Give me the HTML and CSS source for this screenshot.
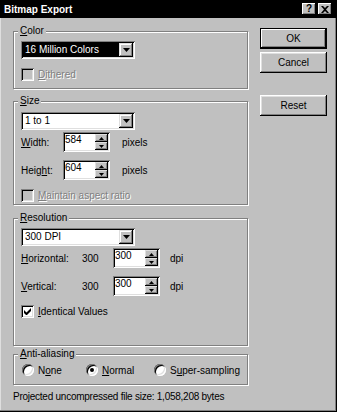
FILE: index.html
```html
<!DOCTYPE html>
<html lang="en">
<head>
    <meta charset="UTF-8">
    <title>Bitmap Export</title>
    <link rel="stylesheet" href="styles.css">
</head>
<body>
    <div class="dialog">
        <div class="titlebar">
            <span class="title">Bitmap Export</span>
            <span class="caption-btns">
                <span class="cap-btn">?</span>
                <span class="cap-btn">
                    <svg width="8" height="7" viewBox="0 0 8 7"><path d="M0 0h2l2 2 2-2h2L5 3.5 8 7H6L4 5 2 7H0l3-3.5z" fill="#000"/></svg>
                </span>
            </span>
        </div>
        <div class="body">
            <div class="left">
                <fieldset class="group group-color">
                    <legend><u>C</u>olor</legend>
                    <div class="combo selected">
                        <span class="combo-text">16 Million Colors</span>
                        <span class="combo-btn"><svg width="7" height="4" viewBox="0 0 7 4"><path d="M0 0h7L3.5 4z" fill="#000"/></svg></span>
                    </div>
                    <div class="check-row disabled">
                        <span class="checkbox"></span>
                        <span class="check-label"><u>D</u>ithered</span>
                    </div>
                </fieldset>

                <fieldset class="group group-size">
                    <legend><u>S</u>ize</legend>
                    <div class="combo">
                        <span class="combo-text">1 to 1</span>
                        <span class="combo-btn"><svg width="7" height="4" viewBox="0 0 7 4"><path d="M0 0h7L3.5 4z" fill="#000"/></svg></span>
                    </div>
                    <div class="row first-row">
                        <span class="lbl lbl-size"><u>W</u>idth:</span>
                        <span class="spin spin-size">
                            <span class="spin-text">584</span>
                            <span class="spin-btns">
                                <span class="spin-btn"><svg width="5" height="3" viewBox="0 0 5 3"><path d="M2.5 0L5 3H0z" fill="#000"/></svg></span>
                                <span class="spin-btn"><svg width="5" height="3" viewBox="0 0 5 3"><path d="M0 0h5L2.5 3z" fill="#000"/></svg></span>
                            </span>
                        </span>
                        <span class="unit">pixels</span>
                    </div>
                    <div class="row">
                        <span class="lbl lbl-size">Heig<u>h</u>t:</span>
                        <span class="spin spin-size">
                            <span class="spin-text">604</span>
                            <span class="spin-btns">
                                <span class="spin-btn"><svg width="5" height="3" viewBox="0 0 5 3"><path d="M2.5 0L5 3H0z" fill="#000"/></svg></span>
                                <span class="spin-btn"><svg width="5" height="3" viewBox="0 0 5 3"><path d="M0 0h5L2.5 3z" fill="#000"/></svg></span>
                            </span>
                        </span>
                        <span class="unit">pixels</span>
                    </div>
                    <div class="check-row disabled">
                        <span class="checkbox"></span>
                        <span class="check-label"><u>M</u>aintain aspect ratio</span>
                    </div>
                </fieldset>

                <fieldset class="group group-res">
                    <legend><u>R</u>esolution</legend>
                    <div class="combo">
                        <span class="combo-text">300 DPI</span>
                        <span class="combo-btn"><svg width="7" height="4" viewBox="0 0 7 4"><path d="M0 0h7L3.5 4z" fill="#000"/></svg></span>
                    </div>
                    <div class="row first-row">
                        <span class="lbl lbl-res"><u>H</u>orizontal:</span>
                        <span class="value">300</span>
                        <span class="spin spin-res">
                            <span class="spin-text">300</span>
                            <span class="spin-btns">
                                <span class="spin-btn"><svg width="5" height="3" viewBox="0 0 5 3"><path d="M2.5 0L5 3H0z" fill="#000"/></svg></span>
                                <span class="spin-btn"><svg width="5" height="3" viewBox="0 0 5 3"><path d="M0 0h5L2.5 3z" fill="#000"/></svg></span>
                            </span>
                        </span>
                        <span class="unit">dpi</span>
                    </div>
                    <div class="row">
                        <span class="lbl lbl-res"><u>V</u>ertical:</span>
                        <span class="value">300</span>
                        <span class="spin spin-res">
                            <span class="spin-text">300</span>
                            <span class="spin-btns">
                                <span class="spin-btn"><svg width="5" height="3" viewBox="0 0 5 3"><path d="M2.5 0L5 3H0z" fill="#000"/></svg></span>
                                <span class="spin-btn"><svg width="5" height="3" viewBox="0 0 5 3"><path d="M0 0h5L2.5 3z" fill="#000"/></svg></span>
                            </span>
                        </span>
                        <span class="unit">dpi</span>
                    </div>
                    <div class="check-row">
                        <span class="checkbox checked"><svg width="7" height="7" viewBox="0 0 7 7"><path d="M0 2v3l2 2h1l4-4V0L2.5 4.5z" fill="#000"/></svg></span>
                        <span class="check-label"><u>I</u>dentical Values</span>
                    </div>
                </fieldset>

                <fieldset class="group group-aa">
                    <legend><u>A</u>nti-aliasing</legend>
                    <div class="radio-row">
                        <span class="radio-item radio-none"><span class="radio"></span><span class="radio-label">N<u>o</u>ne</span></span>
                        <span class="radio-item radio-normal"><span class="radio on"></span><span class="radio-label"><u>N</u>ormal</span></span>
                        <span class="radio-item"><span class="radio"></span><span class="radio-label">S<u>u</u>per-sampling</span></span>
                    </div>
                </fieldset>

                <div class="status">Projected uncompressed file size: 1,058,208 bytes</div>
            </div>
            <div class="right">
                <div class="btn default">OK</div>
                <div class="btn">Cancel</div>
                <div class="btn reset">Reset</div>
            </div>
        </div>
    </div>
</body>
</html>
```

FILE: styles.css
```css
body {
    margin: 0;
    background: #c0c0c0;
    font-family: "Liberation Sans", Arial, sans-serif;
    font-size: 10px;
    color: #000;
}
u {
    text-underline-offset: 1px;
}
.dialog {
    width: 337px;
    height: 412px;
    box-sizing: border-box;
    background: #c0c0c0;
    display: flex;
    flex-direction: column;
    box-shadow: inset -1px -1px #000, inset -2px -2px #808080, inset 1px 1px #dfdfdf;
}
.titlebar {
    height: 18px;
    background: #000;
    color: #fff;
    display: flex;
    align-items: center;
    justify-content: space-between;
    padding: 0 5px 0 4px;
}
.title {
    font-weight: bold;
    font-size: 10px;
}
.caption-btns {
    display: flex;
    gap: 2px;
}
.cap-btn {
    width: 14px;
    height: 12px;
    background: #c0c0c0;
    color: #000;
    font-weight: bold;
    font-size: 10px;
    line-height: 12px;
    text-align: center;
    display: flex;
    align-items: center;
    justify-content: center;
    box-shadow: inset -1px -1px #000, inset 1px 1px #fff, inset -2px -2px #808080;
}
.body {
    display: flex;
    padding: 7px 0 0 13px;
    gap: 12px;
}
.left {
    width: 235px;
    display: flex;
    flex-direction: column;
}
.right {
    width: 67px;
    display: flex;
    flex-direction: column;
    gap: 3px;
    padding-top: 3px;
}

/* group boxes */
.group {
    margin: 0;
    padding: 0 7px;
    border: 1px solid #808080;
    box-shadow: inset 1px 1px #fff, 1px 1px #fff;
    box-sizing: border-box;
    min-width: 0;
}
.group legend {
    padding: 0 2px;
    margin-left: -3px;
    line-height: 12px;
    background: #c0c0c0;
}
.group-color { height: 64px; padding-top: 4px; }
.group-size { height: 110px; margin-top: 6px; padding-top: 5px; }
.group-res { height: 134px; margin-top: 7px; padding-top: 4px; }
.group-aa { height: 37px; margin-top: 2px; padding-top: 4px; }

/* combo box */
.combo {
    width: 114px;
    height: 18px;
    box-sizing: border-box;
    background: #fff;
    padding: 2px;
    display: flex;
    box-shadow: inset 1px 1px #808080, inset -1px -1px #fff, inset 2px 2px #000, inset -2px -2px #dfdfdf;
}
.combo-text {
    flex: 1;
    padding-left: 2px;
    line-height: 14px;
}
.combo.selected .combo-text {
    background: #000;
    color: #fff;
}
.combo-btn {
    width: 14px;
    height: 14px;
    box-sizing: border-box;
    background: #c0c0c0;
    display: flex;
    align-items: center;
    justify-content: center;
    box-shadow: inset -1px -1px #000, inset 1px 1px #dfdfdf, inset -2px -2px #808080, inset 2px 2px #fff;
}

/* checkbox rows */
.check-row {
    display: flex;
    align-items: center;
    gap: 4px;
    margin-top: 9px;
    height: 13px;
}
.checkbox {
    width: 13px;
    height: 13px;
    box-sizing: border-box;
    background: #fff;
    display: flex;
    align-items: center;
    justify-content: center;
    box-shadow: inset 1px 1px #808080, inset -1px -1px #fff, inset 2px 2px #000, inset -2px -2px #dfdfdf;
}
.disabled .checkbox {
    background: #c0c0c0;
}
.disabled .check-label {
    color: #808080;
    text-shadow: 1px 1px #fff;
}

/* label + spinner rows */
.row {
    display: flex;
    align-items: center;
    height: 20px;
    margin-top: 8px;
}
.row.first-row {
    margin-top: 2px;
}
.lbl-size { width: 42px; }
.lbl-res { width: 61px; }
.value { width: 31px; }
.spin {
    height: 20px;
    box-sizing: border-box;
    background: #fff;
    padding: 2px;
    display: flex;
    box-shadow: inset 1px 1px #808080, inset -1px -1px #fff, inset 2px 2px #000, inset -2px -2px #dfdfdf;
}
.spin-size { width: 47px; }
.spin-res { width: 47px; }
.spin-text {
    flex: 1;
    line-height: 11px;
}
.spin-btns {
    width: 13px;
    display: flex;
    flex-direction: column;
}
.spin-btn {
    flex: 1;
    background: #c0c0c0;
    display: flex;
    align-items: center;
    justify-content: center;
    box-shadow: inset -1px -1px #000, inset 1px 1px #dfdfdf, inset -2px -2px #808080;
}
.unit {
    margin-left: 12px;
}
.spin-res + .unit {
    margin-left: 10px;
}

/* radios */
.radio-row {
    display: flex;
    align-items: center;
    height: 12px;
    margin-left: 1px;
}
.radio-item {
    display: flex;
    align-items: center;
    gap: 4px;
    white-space: nowrap;
}
.radio-none { width: 64px; }
.radio-normal { width: 68px; }
.radio {
    width: 12px;
    height: 12px;
    flex: none;
    border-radius: 50%;
    background: #fff;
    display: flex;
    align-items: center;
    justify-content: center;
    box-shadow: inset 1px 1px #808080, inset -1px -1px #fff, inset 2px 2px #000, inset -2px -2px #dfdfdf;
}
.radio.on::after {
    content: "";
    width: 4px;
    height: 4px;
    border-radius: 50%;
    background: #000;
}

.status {
    margin-top: 6px;
    letter-spacing: -0.25px;
}

/* push buttons */
.btn {
    height: 21px;
    box-sizing: border-box;
    display: flex;
    align-items: center;
    justify-content: center;
    box-shadow: inset -1px -1px #000, inset 1px 1px #fff, inset -2px -2px #808080, inset 2px 2px #dfdfdf;
}
.btn.default {
    box-shadow: inset 0 0 0 1px #000, inset -2px -2px #000, inset 2px 2px #fff, inset -3px -3px #808080;
}
.btn.reset {
    margin-top: 19px;
}
```
